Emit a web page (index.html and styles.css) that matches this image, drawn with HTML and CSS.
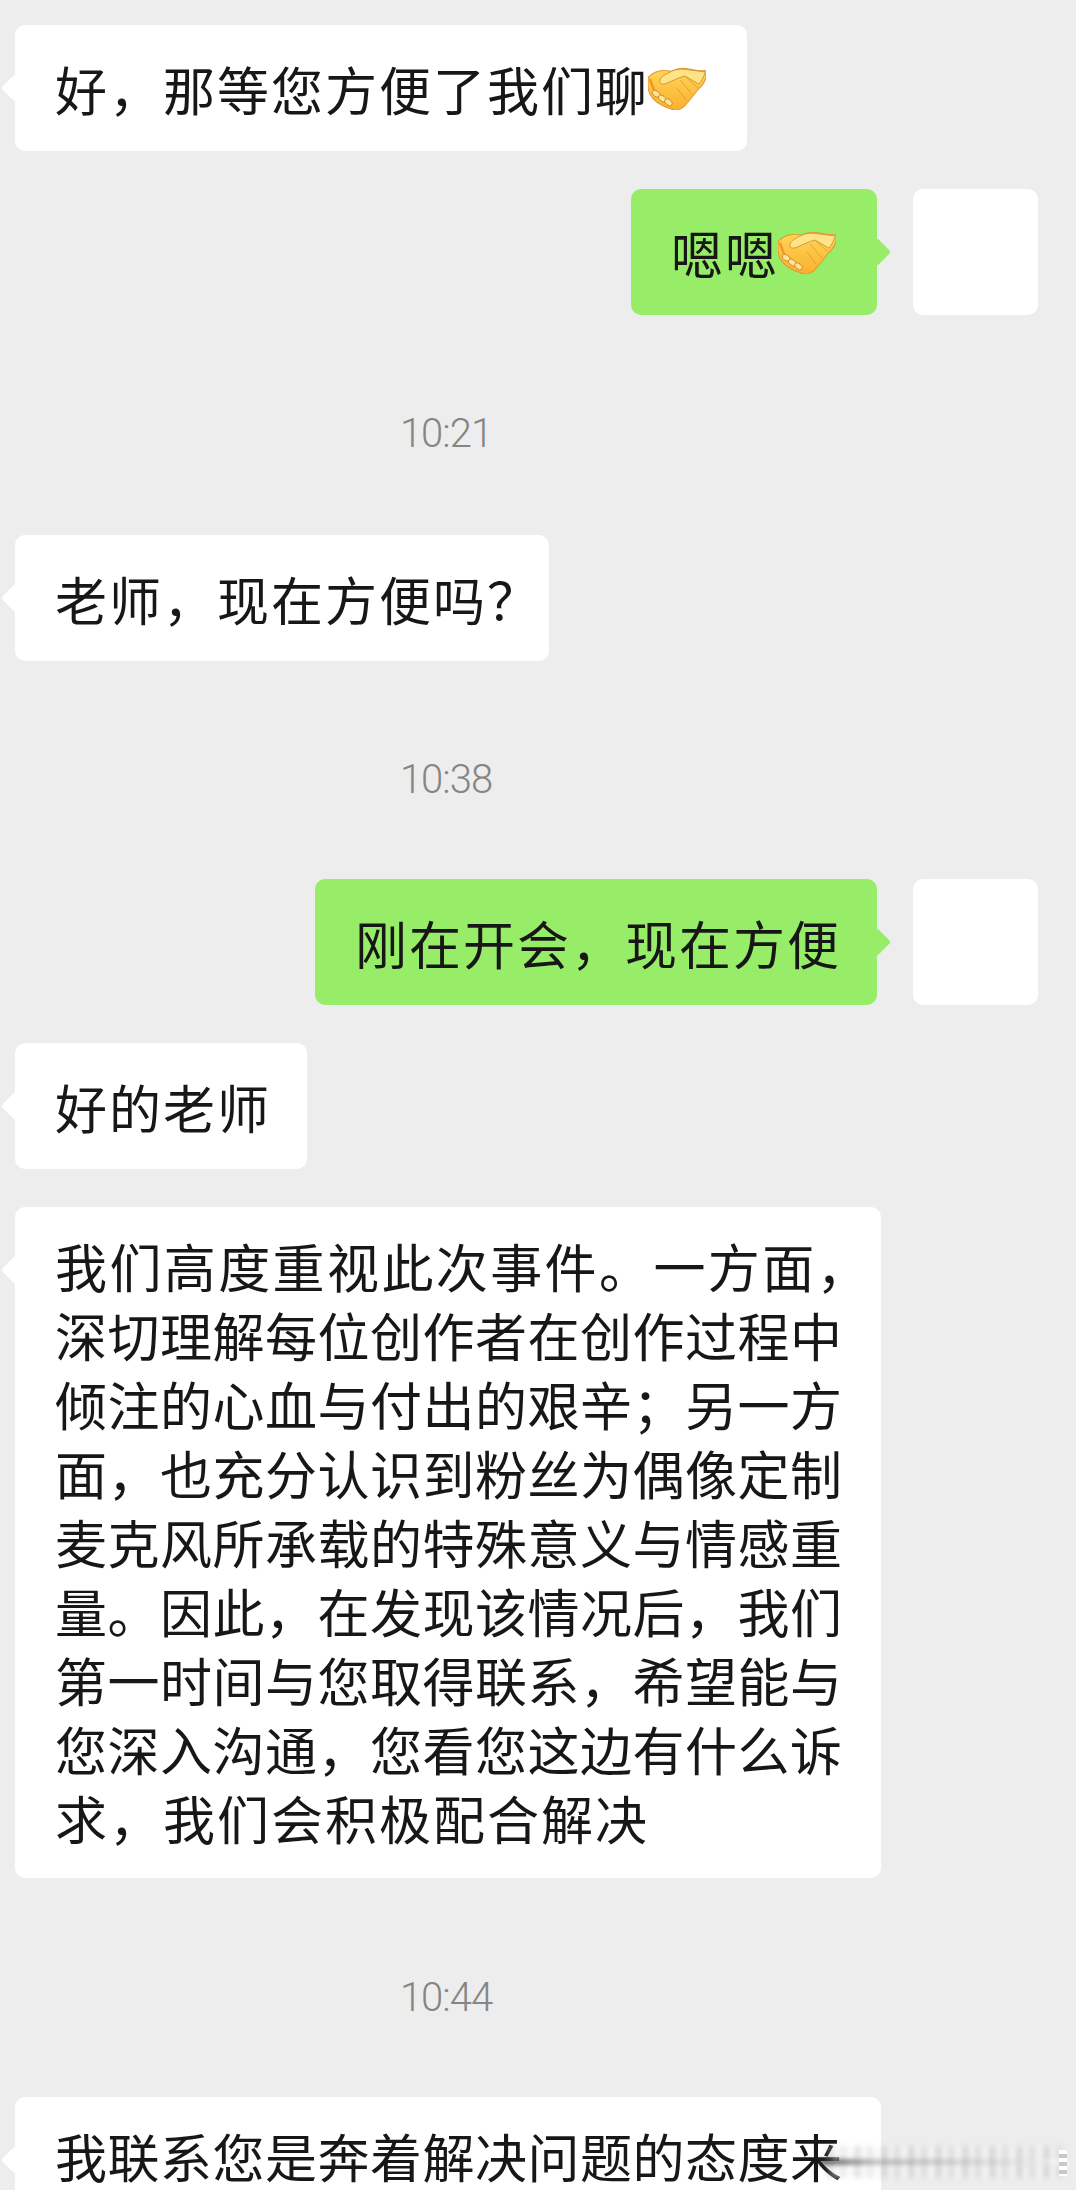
FILE: index.html
```html
<!DOCTYPE html>
<html lang="zh-CN">
<head>
<meta charset="utf-8">
<title>聊天记录</title>
<link rel="stylesheet" href="styles.css">
</head>
<body>
<svg class="defs" width="0" height="0" aria-hidden="true">
  <defs>
    <linearGradient id="hand" x1="0" y1="0" x2="0" y2="1">
      <stop offset="0" stop-color="#ffd75a"/>
      <stop offset="1" stop-color="#fbb02e"/>
    </linearGradient>
    <symbol id="shake" viewBox="0 0 170 125">
      <path d="M2 28C18 14 34 8 50 10L70 12C85 3 105 2 120 5C140 9 155 12 170 10C173 30 164 50 148 64C137 78 122 98 106 115C95 125 80 128 66 122C43 115 16 100 5 78C-1 60-2 42 2 28Z" fill="url(#hand)" stroke="#e6982c" stroke-width="3"/>
      <path d="M35 45C32 30 50 22 62 16C78 5 100 4 120 8L168 14C165 26 158 38 150 50L108 26C92 30 75 38 58 46C48 50 38 52 35 45Z" fill="#ffe387" stroke="#d08c30" stroke-width="2.5"/>
      <path d="M108 26L148 62M94 38L130 80M84 60L112 98" stroke="#e09a35" stroke-width="2.5" fill="none"/>
      <path d="M5 34L18 68" stroke="#f29a24" stroke-width="8" fill="none"/>
      <ellipse cx="24" cy="78" rx="13" ry="8" transform="rotate(30 24 78)" fill="#ffe593" stroke="#c88228" stroke-width="2.5"/>
      <ellipse cx="42" cy="92" rx="13" ry="8" transform="rotate(35 42 92)" fill="#ffe593" stroke="#c88228" stroke-width="2.5"/>
      <ellipse cx="60" cy="103" rx="13" ry="8" transform="rotate(40 60 103)" fill="#ffe593" stroke="#c88228" stroke-width="2.5"/>
    </symbol>
  </defs>
</svg>

<main class="chat">
  <div class="row row-in">
    <div class="bubble bubble-in single wide sp-a">好，那等您方便了我们聊<svg class="emoji"><use href="#shake"/></svg></div>
  </div>

  <div class="row row-out gap-msg">
    <div class="bubble bubble-out single wide sp-a">嗯嗯<svg class="emoji"><use href="#shake"/></svg></div>
    <div class="avatar"></div>
  </div>

  <div class="time">10:21</div>

  <div class="row row-in">
    <div class="bubble bubble-in single tight sp-a">老师，现在方便吗？</div>
  </div>

  <div class="time time-mid">10:38</div>

  <div class="row row-out">
    <div class="bubble bubble-out single sp-a">刚在开会，现在方便</div>
    <div class="avatar"></div>
  </div>

  <div class="row row-in gap-msg">
    <div class="bubble bubble-in single sp-a">好的老师</div>
  </div>

  <div class="row row-in gap-msg">
    <div class="bubble bubble-in multi">
      <span class="line sp-c">我们高度重视此次事件。一方面，</span>
      <span class="line sp-b">深切理解每位创作者在创作过程中</span>
      <span class="line sp-b">倾注的心血与付出的艰辛；另一方</span>
      <span class="line sp-b">面，也充分认识到粉丝为偶像定制</span>
      <span class="line sp-b">麦克风所承载的特殊意义与情感重</span>
      <span class="line sp-b">量。因此，在发现该情况后，我们</span>
      <span class="line sp-b">第一时间与您取得联系，希望能与</span>
      <span class="line sp-b">您深入沟通，您看您这边有什么诉</span>
      <span class="line sp-a">求，我们会积极配合解决</span>
    </div>
  </div>

  <div class="time time-last">10:44</div>

  <div class="row row-in">
    <div class="bubble bubble-in multi">
      <span class="line sp-b">我联系您是奔着解决问题的态度来</span>
    </div>
  </div>
</main>

<div class="watermark" aria-hidden="true">
  <div class="wm-stripes"></div>
  <div class="wm-bar"></div>
  <div class="wm-digits"></div>
</div>
</body>
</html>
```
FILE: styles.css
```css
html, body {
  margin: 0;
  height: 2190px;
  overflow: hidden;
  background: #ededed;
}
body {
  position: relative;
  font-family: "Noto Sans CJK SC", "Noto Sans", sans-serif;
  color: #171717;
}
.defs { position: absolute; }

.chat {
  display: flex;
  flex-direction: column;
  padding-top: 25px;
}
.row { display: flex; }
.row-in { justify-content: flex-start; padding-left: 15px; }
.row-out { justify-content: flex-end; padding-right: 38px; gap: 36px; }
.gap-msg { margin-top: 38px; }

.bubble {
  position: relative;
  box-sizing: border-box;
  border-radius: 10px;
  font-size: 52px;
  line-height: 69px;
}
.bubble::after {
  content: "";
  position: absolute;
  top: 53px;
  width: 20px;
  height: 20px;
  border-radius: 3px;
  transform: rotate(45deg);
  background: inherit;
}
.bubble-in { background: #fff; padding-left: 40px; }
.bubble-in::after { left: -10px; }
.bubble-out { background: #97ed68; padding-left: 40px; }
.bubble-out::after { right: -10px; }

.single {
  display: flex;
  align-items: center;
  height: 126px;
  padding-right: 36px;
  white-space: nowrap;
}
.wide { padding-right: 41px; }
.tight { padding-right: 8px; }
.multi {
  width: 866px;
  padding-top: 24px;
  padding-bottom: 26px;
}
.line { display: block; white-space: nowrap; }
.sp-a { letter-spacing: 2px; }
.sp-b { letter-spacing: 0.5px; }
.sp-c { letter-spacing: 2.4px; }

.emoji {
  flex: none;
  width: 58px;
  height: 43px;
  margin-left: -1px;
}

.avatar {
  flex: none;
  width: 125px;
  height: 126px;
  border-radius: 10px;
  background: #fff;
}

.time {
  margin: 89px 0 71px;
  padding-right: 184px;
  height: 60px;
  line-height: 60px;
  text-align: center;
  font-family: Roboto, "Liberation Sans", sans-serif;
  font-weight: 300;
  font-size: 40px;
  color: #858585;
  letter-spacing: -1px;
}
.time-mid { margin-bottom: 69px; }
.time-last { margin: 90px 0 69px; }

.watermark {
  position: absolute;
  left: 815px;
  top: 2140px;
  width: 261px;
  height: 42px;
  pointer-events: none;
}
.wm-stripes {
  position: absolute;
  left: 12px;
  right: 12px;
  top: 6px;
  bottom: 4px;
  background: repeating-linear-gradient(90deg, rgba(170,170,170,.32) 0 7px, rgba(250,250,250,.6) 7px 12px, rgba(185,185,185,.25) 12px 20px, rgba(250,250,250,.55) 20px 27px);
  filter: blur(2.5px);
}
.wm-bar {
  position: absolute;
  left: 4px;
  right: 8px;
  top: 19px;
  height: 6px;
  background: linear-gradient(90deg, rgba(40,40,40,.75), rgba(130,130,130,.45) 22%, rgba(190,190,190,.28) 75%, rgba(255,255,255,.6));
  filter: blur(2px);
}
.wm-digits {
  position: absolute;
  right: 9px;
  top: 10px;
  width: 8px;
  height: 26px;
  background: repeating-linear-gradient(180deg, #fff 0 4px, #c8c8c8 4px 8px);
  filter: blur(.6px);
}
```
